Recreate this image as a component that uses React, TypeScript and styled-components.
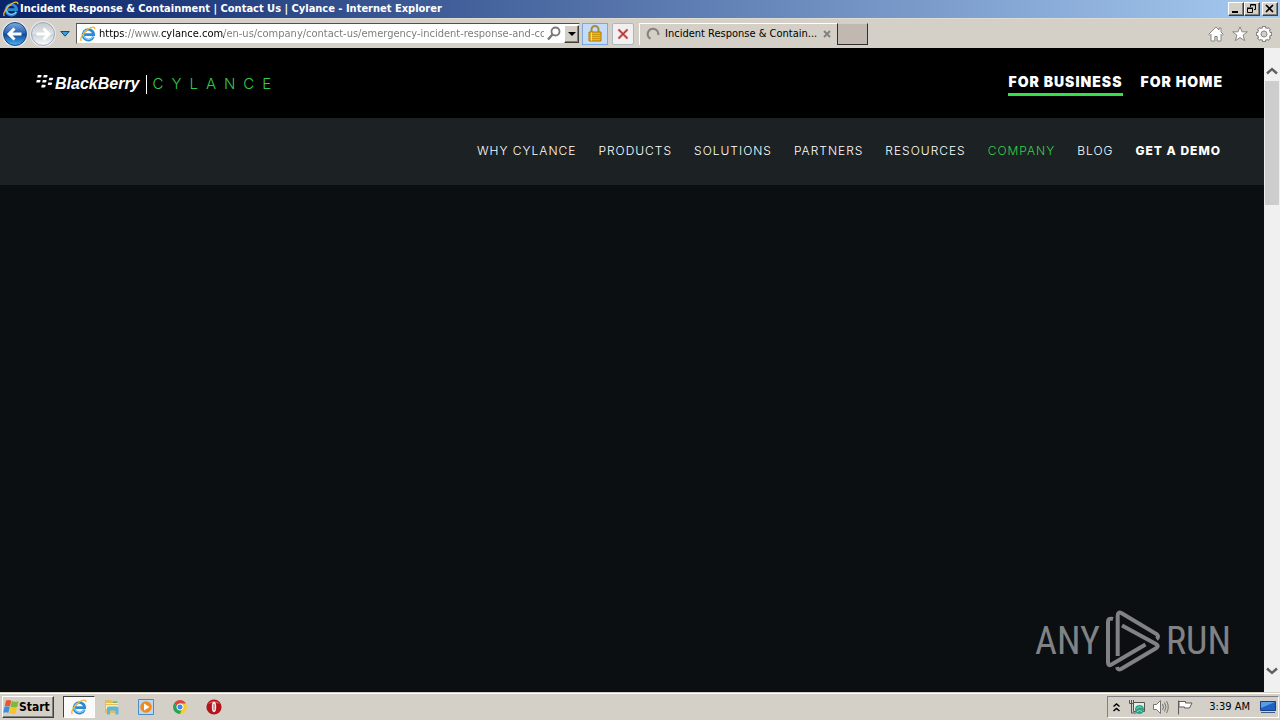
import React from "react";
import styled, { createGlobalStyle, css } from "styled-components";

const uiFont = '"DejaVu Sans Condensed", "DejaVu Sans", sans-serif';
const siteFont = 'Inter, Roboto, sans-serif';

const GlobalStyle = createGlobalStyle`
  * { box-sizing: border-box; }
  body { margin: 0; background: #d4d0c8; }
  button, input { font: inherit; padding: 0; margin: 0; }
  a { color: inherit; text-decoration: none; }
  svg { display: block; flex: none; }
`;

const raised = css`
  border: 1px solid;
  border-color: #ffffff #404040 #404040 #ffffff;
  box-shadow: inset -1px -1px 0 #808080;
`;

const Screen = styled.div`
  display: flex;
  flex-direction: column;
  min-height: 100vh;
  font: 11px/14px ${uiFont};
  color: #000;
`;

const TitleBar = styled.header`
  display: flex;
  align-items: center;
  gap: 1px;
  height: 18px;
  padding: 0 2px 0 3px;
  background: linear-gradient(to right, #0a246a, #a6caf0);
`;

const WindowTitle = styled.h1`
  flex: 1;
  margin: 0;
  overflow: hidden;
  white-space: nowrap;
  color: #fff;
  font: bold 11px/18px ${uiFont};
`;

const WindowButtons = styled.div`
  display: flex;
`;

const WindowButton = styled.button<{ $apart?: boolean }>`
  ${raised}
  display: grid;
  place-items: center;
  width: 16px;
  height: 14px;
  margin-left: ${(p) => (p.$apart ? 2 : 0)}px;
  background: #d4d0c8;
`;

const Toolbar = styled.div`
  display: flex;
  align-items: center;
  height: 30px;
  padding: 0 4px 0 1px;
  background: #d4d0c8;
  border-top: 1px solid #dedbd5;
`;

const PlainButton = styled.button<{ $w: number }>`
  display: grid;
  place-items: center;
  width: ${(p) => p.$w}px;
  height: 28px;
  border: 0;
  background: none;
`;

const AddressBar = styled.div`
  display: flex;
  align-items: center;
  gap: 3px;
  flex: 0 1 504px;
  min-width: 0;
  height: 21px;
  margin: 0 2px 0 4px;
  padding-left: 3px;
  background: #fff;
  border: 1px solid;
  border-color: #505050 #d4d0c8 #d4d0c8 #606060;
`;

const AddressInput = styled.input`
  flex: 1;
  min-width: 0;
  height: 18px;
  border: 0;
  outline: 0;
  color: #6d6d6d;
  background: linear-gradient(to right, #000 27px, #777 27px, #777 62px, #000 62px, #000 125px, #777 125px);
  -webkit-background-clip: text;
  background-clip: text;
  -webkit-text-fill-color: transparent;
`;

const DropButton = styled.button`
  ${raised}
  display: grid;
  place-items: center;
  width: 15px;
  height: 18px;
  background: #d4d0c8;
`;

const LockButton = styled.button`
  display: grid;
  place-items: center;
  width: 26px;
  height: 22px;
  background: #c4dcf8;
  border: 1px solid #7da7dc;
`;

const StopButton = styled.button`
  display: grid;
  place-items: center;
  width: 22px;
  height: 22px;
  margin: 0 5px 0 4px;
  background: #f1efef;
  border: 1px solid #aeb6c0;
  border-radius: 2px;
`;

const Tab = styled.div`
  display: flex;
  align-items: center;
  flex: 0 1 198px;
  min-width: 0;
  height: 22px;
  padding: 0 2px 0 6px;
  border-top: 1px solid #fff;
  border-left: 1px solid #fff;
`;

const TabTitle = styled.span`
  flex: 1;
  margin-left: 5px;
  white-space: nowrap;
`;

const NewTab = styled.button`
  width: 31px;
  height: 22px;
  background: #c1b9b1;
  border: 1px solid;
  border-color: #d4d0c8 #303030 #303030 #303030;
`;

const Spacer = styled.div`
  flex: 1;
`;

const ViewPort = styled.div`
  display: flex;
  flex: 1;
`;

const Page = styled.div`
  display: flex;
  flex-direction: column;
  flex: 1;
  min-width: 0;
  background: #0b0f12;
  color: #fff;
  font-family: ${siteFont};
`;

const BrandBar = styled.div`
  display: flex;
  align-items: center;
  justify-content: space-between;
  height: 70px;
  padding: 2px 41px 0 36px;
  background: #000;
`;

const Brand = styled.a`
  display: flex;
  align-items: center;
  height: 20px;
`;

const BlackBerryWord = styled.span`
  margin-left: 1px;
  font: italic bold 16px/20px "Liberation Sans", sans-serif;
`;

const BrandRule = styled.span`
  width: 1px;
  height: 19px;
  margin: 0 6px;
  background: #fff;
`;

const CylanceWord = styled.span`
  color: #35c94b;
  font: 300 15px/20px ${siteFont};
  letter-spacing: 8px;
`;

const Audience = styled.nav`
  display: flex;
  gap: 18px;
`;

const AudienceLink = styled.a<{ $current?: boolean }>`
  padding: 1px 0 2px;
  border-bottom: 3px solid ${(p) => (p.$current ? "#35e14a" : "transparent")};
  font-size: 14px;
  line-height: 18px;
  font-weight: 900;
  letter-spacing: 1px;
`;

const SiteNav = styled.nav`
  display: flex;
  align-items: center;
  justify-content: flex-end;
  gap: 22px;
  height: 67px;
  padding: 0 43px 2px 0;
  background: #1c2124;
`;

const NavLink = styled.a<{ $tone?: "current" | "strong" }>`
  color: ${(p) => (p.$tone === "current" ? "#35d046" : "#fff")};
  font-size: 12px;
  line-height: 16px;
  font-weight: ${(p) => (p.$tone === "strong" ? 800 : 300)};
  letter-spacing: 1px;
  white-space: nowrap;
`;

const Stage = styled.main`
  display: flex;
  flex: 1;
  align-items: flex-end;
  justify-content: flex-end;
  padding: 0 33px 20px 0;
`;

const Watermark = styled.div`
  display: flex;
  align-items: center;
  gap: 5px;
  color: #808285;
  font: 400 38px/62px "Roboto Condensed", "Liberation Sans Narrow", "DejaVu Sans Condensed", sans-serif;
`;

const ScrollTrack = styled.div`
  display: flex;
  flex-direction: column;
  width: 16px;
  padding: 14px 0 12px;
  background: #f0f0f0;
`;

const ScrollButton = styled.button`
  display: grid;
  place-items: center;
  height: 18px;
  width: 16px;
  border: 0;
  background: none;
`;

const ScrollThumb = styled.div`
  height: 124px;
  margin: 1px 1px 0;
  background: #cdcdcd;
`;

const TaskBar = styled.footer`
  display: flex;
  align-items: center;
  height: 28px;
  padding: 2px 1px 0 2px;
  background: #d4d0c8;
  box-shadow: inset 0 1px 0 #d4d0c8, inset 0 2px 0 #fff;
`;

const StartButton = styled.button`
  ${raised}
  display: flex;
  align-items: center;
  width: 52px;
  height: 22px;
  background: #d4d0c8;
  font: bold 12px/16px ${uiFont};
`;

const TaskButton = styled.button<{ $pressed?: boolean }>`
  display: grid;
  place-items: center;
  width: ${(p) => (p.$pressed ? 32 : 34)}px;
  height: 22px;
  margin-left: ${(p) => (p.$pressed ? 9 : 0)}px;
  background: ${(p) => (p.$pressed ? "#fbfaf8" : "none")};
  border: ${(p) => (p.$pressed ? "1px solid" : "0")};
  border-color: #404040 #fff #fff #404040;
`;

const Tray = styled.div`
  display: flex;
  align-items: center;
  height: 22px;
  padding: 0 2px 0 4px;
  gap: 8px;
  border: 1px solid;
  border-color: #808080 #fff #fff #808080;
`;

const Clock = styled.time`
  margin: 0 2px 0 8px;
  white-space: nowrap;
`;

const IeIcon = ({ size = 16 }: { size?: number }) => (
  <svg width={size} height={size} viewBox="0 0 16 16" fill="none">
    <path d="M13.4 10.6A5.3 5.3 0 1 1 13.7 8.700H4.600" stroke="#2b8ad6" strokeWidth="2.700" />
    <path d="M13.2 10.9A5.3 5.3 0 0 1 3.4 8.5C3.4 6 5.500 3.900 8.300 3.900" stroke="#7fcdf7" strokeWidth="1.200" />
    <path d="M1.200 15C-.4 12.500 3.500 6.200 8.300 3 11.500.8 15 .2 14.800 3.200" stroke="#f0b62a" strokeWidth="1.300" />
  </svg>
);

const RoundArrow = ({ dir }: { dir: "back" | "forward" }) => {
  const back = dir === "back";
  return (
    <svg width="28" height="28" viewBox="0 0 28 28">
      <defs>
        <linearGradient id={dir} x1="0" y1="0" x2="0" y2="1">
          <stop offset="0" stopColor={back ? "#7fabdf" : "#c6cbd1"} />
          <stop offset=".48" stopColor={back ? "#245fb0" : "#dfe2e6"} />
          <stop offset=".5" stopColor={back ? "#104894" : "#c9d0d7"} />
          <stop offset="1" stopColor={back ? "#49b2f0" : "#fbfcfd"} />
        </linearGradient>
      </defs>
      <circle cx="14" cy="14" r="13" fill="#e7ebf1" />
      <circle cx="14" cy="14" r="11.500" fill={`url(#${dir})`} stroke={back ? "#1d4782" : "#9da6b1"} />
      <path
        d={back ? "M20.500 14H9M13.500 8.500 8 14l5.500 5.500" : "M7.500 14H19M14.500 8.500 20 14l-5.500 5.500"}
        fill="none"
        stroke="#fff"
        strokeWidth="3"
      />
    </svg>
  );
};

const LockIcon = () => (
  <svg width="14" height="17" viewBox="0 0 14 17">
    <path d="M3.500 8V4.500a3.500 3.500 0 0 1 7 0V8" fill="none" stroke="#a58b3c" strokeWidth="2" />
    <path d="M1 7h12v9H1z" fill="#e9b71d" stroke="#a97908" />
    <path d="M2 9.500h10M2 11.500h10M2 13.500h10" stroke="#cf9a12" />
    <path d="M3.500 7.500v8" stroke="#fbe27a" />
  </svg>
);

const BerryDots = () => (
  <svg width="18" height="20" viewBox="0 0 18 20" fill="#fff">
    <path d="M1.800 1h3q1 0 .8 1.100-.3 1.500-1.600 1.500H1.200zM7.800 1h3q1 0 .8 1.100-.3 1.500-1.600 1.500H7.200zM.8 6h3q1 0 .8 1.100-.3 1.500-1.600 1.500H.2zM6.800 6h3q1 0 .8 1.100-.3 1.500-1.600 1.500H6.200zM13.300 3.700h3q1 0 .8 1.100-.3 1.500-1.600 1.500h-2.800zM12.300 8.500h3q1 0 .8 1.100-.3 1.500-1.600 1.500h-2.800zM5.800 10.800h3q1 0 .8 1.100-.3 1.500-1.600 1.500H5.200z" />
  </svg>
);

const PlayMark = () => (
  <svg width="56" height="62" viewBox="0 0 56 62" fill="none" stroke="#808285" strokeWidth="4">
    <path d="M8 9Q3 7.500 3 12V52.500q0 4 3.500 2L40.500 34.500" />
    <path d="M12.700 46V6q0-5 4-2.700L51.500 24q3 3 0 5" />
    <path d="M17 15.500 51 34q3.500 2 0 4.200L16 59q-3 1.500-4-2" />
  </svg>
);

const Chevron = ({ down }: { down?: boolean }) => (
  <svg width="12" height="8" viewBox="0 0 12 8">
    <path d={down ? "M1 1.500 6 6l5-4.500" : "M1 6.500 6 2l5 4.500"} fill="none" stroke="#606060" strokeWidth="2.400" />
  </svg>
);

const nav: { label: string; tone?: "current" | "strong" }[] = [
  { label: "WHY CYLANCE" },
  { label: "PRODUCTS" },
  { label: "SOLUTIONS" },
  { label: "PARTNERS" },
  { label: "RESOURCES" },
  { label: "COMPANY", tone: "current" },
  { label: "BLOG" },
  { label: "GET A DEMO", tone: "strong" },
];

export default function App() {
  return (
    <Screen>
      <GlobalStyle />
      <TitleBar>
        <IeIcon />
        <WindowTitle>Incident Response &amp; Containment | Contact Us | Cylance - Internet Explorer</WindowTitle>
        <WindowButtons>
          <WindowButton aria-label="Minimize">
            <svg width="12" height="10"><path d="M2 8h6" stroke="#000" strokeWidth="2" /></svg>
          </WindowButton>
          <WindowButton aria-label="Restore">
            <svg width="12" height="10" fill="none" stroke="#000">
              <path d="M4.500 3V.5h5v5H8M4 1h6M1.500 4.500h5v4h-5zM1 4h6" />
            </svg>
          </WindowButton>
          <WindowButton aria-label="Close" $apart>
            <svg width="12" height="10"><path d="m2 1 7 7M9 1 2 8" stroke="#000" strokeWidth="1.700" /></svg>
          </WindowButton>
        </WindowButtons>
      </TitleBar>

      <Toolbar>
        <PlainButton $w={28} aria-label="Back"><RoundArrow dir="back" /></PlainButton>
        <PlainButton $w={28} aria-label="Forward"><RoundArrow dir="forward" /></PlainButton>
        <PlainButton $w={15} aria-label="Recent pages">
          <svg width="10" height="6"><path d="M.8.5h8.400L5 5.200z" fill="#3aa0d8" stroke="#174a7c" /></svg>
        </PlainButton>
        <AddressBar>
          <IeIcon />
          <AddressInput
            aria-label="Address"
            defaultValue="https://www.cylance.com/en-us/company/contact-us/emergency-incident-response-and-cor"
          />
          <svg width="14" height="15" viewBox="0 0 14 15" fill="none" stroke="#777">
            <circle cx="8.500" cy="5.500" r="4" strokeWidth="1.800" />
            <path d="m5.500 8.500-4.500 5" strokeWidth="2.400" />
          </svg>
          <DropButton aria-label="Show address list">
            <svg width="8" height="4"><path d="M0 0h8L4 4z" /></svg>
          </DropButton>
        </AddressBar>
        <LockButton aria-label="Security report"><LockIcon /></LockButton>
        <StopButton aria-label="Stop">
          <svg width="12" height="12" fill="none">
            <path d="m1.500 1.500 9 9M10.500 1.500l-9 9" stroke="#dfa0a0" strokeWidth="2.600" />
            <path d="m1.500 1.500 9 9M10.500 1.500l-9 9" stroke="#b83232" strokeWidth="1.400" />
          </svg>
        </StopButton>
        <Tab>
          <svg width="14" height="14" viewBox="0 0 14 14" fill="none" stroke="#86827c" strokeWidth="2.200">
            <path d="M4.500 11.800A5.300 5.300 0 1 1 12.200 8" />
          </svg>
          <TabTitle>Incident Response &amp; Contain...</TabTitle>
          <PlainButton $w={16} aria-label="Close tab">
            <svg width="8" height="8"><path d="m1 1 6 6M7 1 1 7" stroke="#85827d" strokeWidth="2" /></svg>
          </PlainButton>
        </Tab>
        <NewTab aria-label="New tab" />
        <Spacer />
        <PlainButton $w={24} aria-label="Home">
          <svg width="16" height="16" viewBox="0 0 16 16" fill="#fff" stroke="#8a8782">
            <path d="M8 1 .8 8.200l1.200 1.200 1-1V15h3.800v-4.500h2.400V15H13V8.400l1 1 1.200-1.200L13 6V2h-2v2z" />
          </svg>
        </PlainButton>
        <PlainButton $w={24} aria-label="Favorites">
          <svg width="16" height="16" viewBox="0 0 16 16" fill="#fff" stroke="#8a8782">
            <path d="m8 .8 2 5h5.300l-4.200 3.400 1.600 5.500L8 11.500l-4.700 3.200 1.600-5.500L.7 5.800H6z" />
          </svg>
        </PlainButton>
        <PlainButton $w={24} aria-label="Tools">
          <svg width="18" height="18" viewBox="0 0 18 18" fill="none">
            <path d="M9 1v16M1 9h16M3.300 3.300l11.400 11.400M14.700 3.300 3.300 14.700" stroke="#8a8782" strokeWidth="4" />
            <circle cx="9" cy="9" r="4.700" stroke="#8a8782" strokeWidth="4.600" />
            <path d="M9 2v14M2 9h14M4 4l10 10M14 4 4 14" stroke="#fff" strokeWidth="2" />
            <circle cx="9" cy="9" r="4.500" fill="#d4d0c8" stroke="#fff" strokeWidth="3" />
            <circle cx="9" cy="9" r="3" stroke="#8a8782" />
          </svg>
        </PlainButton>
      </Toolbar>

      <ViewPort>
        <Page>
          <BrandBar>
            <Brand href="#">
              <BerryDots />
              <BlackBerryWord>BlackBerry</BlackBerryWord>
              <BrandRule />
              <CylanceWord>CYLANCE</CylanceWord>
            </Brand>
            <Audience aria-label="Audience">
              <AudienceLink href="#" $current>FOR BUSINESS</AudienceLink>
              <AudienceLink href="#">FOR HOME</AudienceLink>
            </Audience>
          </BrandBar>
          <SiteNav aria-label="Main">
            {nav.map((item) => (
              <NavLink key={item.label} href="#" $tone={item.tone}>{item.label}</NavLink>
            ))}
          </SiteNav>
          <Stage>
            <Watermark>
              <span>ANY</span>
              <PlayMark />
              <span>RUN</span>
            </Watermark>
          </Stage>
        </Page>
        <ScrollTrack>
          <ScrollButton aria-label="Scroll up"><Chevron /></ScrollButton>
          <ScrollThumb />
          <Spacer />
          <ScrollButton aria-label="Scroll down"><Chevron down /></ScrollButton>
        </ScrollTrack>
      </ViewPort>

      <TaskBar>
        <StartButton>
          <svg width="16" height="16" viewBox="0 0 16 16">
            <path d="M3 1.500q2.700-1.200 5.300 0L7 7.300q-2.700-1-5.300.2z" fill="#e8562a" />
            <path d="M8.800 2q2.900 1.400 6.900.2L14.200 8q-3.600 1.200-6.700-.3z" fill="#7fb83a" />
            <path d="M1.500 8q2.700-1.200 5.300-.2L5.400 13.700q-2.700-1-5.200.1z" fill="#3c8fd8" />
            <path d="M7.300 8.300q3.200 1.400 6.700.3l-1.400 5.900q-3.600 1.200-6.700-.4z" fill="#f6c52c" />
          </svg>
          Start
        </StartButton>
        <TaskButton $pressed aria-label="Internet Explorer"><IeIcon /></TaskButton>
        <TaskButton aria-label="Explorer">
          <svg width="16" height="16" viewBox="0 0 16 16">
            <path d="M1 1h6l1 1.500h6V14H1z" fill="#e3bf55" />
            <path d="M2 4h12v6H2z" fill="#fbeeb0" />
            <path d="M2 5.500h12" stroke="#e3bf55" />
            <path d="M3 15.500V9q0-1.500 1.500-1.500h8.500q1.500 0 1.500 1.500v6.500h-3V11.500h-5.500v4z" fill="#5db5e2" />
            <path d="M9 2.500h4V4H9z" fill="#6db45f" />
          </svg>
        </TaskButton>
        <TaskButton aria-label="Media Player">
          <svg width="16" height="16" viewBox="0 0 16 16">
            <path d="M.5.5h15v15H.5z" fill="#b9d8f2" stroke="#4b8cc8" />
            <circle cx="8" cy="8" r="5.800" fill="#f18a1c" />
            <path d="M6 4.500v7L11.500 8z" fill="#fff" />
          </svg>
        </TaskButton>
        <TaskButton aria-label="Chrome">
          <svg width="14" height="14" viewBox="0 0 14 14">
            <path d="M7 7 1 3.500a7 7 0 0 1 12 0z" fill="#dd4437" />
            <path d="M7 7V3.500h6A7 7 0 0 1 7 14z" fill="#f8cd2e" />
            <path d="m7 7 1.500 3L7 14A7 7 0 0 1 1 3.500z" fill="#2da152" />
            <circle cx="7" cy="7" r="3.100" fill="#4387ed" stroke="#fff" />
          </svg>
        </TaskButton>
        <TaskButton aria-label="Opera">
          <svg width="16" height="16" viewBox="0 0 16 16">
            <circle cx="8" cy="8" r="7.600" fill="#b3131b" />
            <path d="M2 5a7 6 0 0 1 12 0q-6-2-12 0" fill="#d9504c" />
            <ellipse cx="8" cy="8" rx="2.200" ry="5.200" fill="#f4e9e7" />
            <path d="M8 5v6" stroke="#a8545a" />
          </svg>
        </TaskButton>
        <Spacer />
        <Tray>
          <svg width="9" height="9" viewBox="0 0 9 9" fill="none" stroke="#000"><path d="M1.500 3.500l3-2.500 3 2.500M1.500 8l3-2.500 3 2.500" strokeWidth="1.500" /></svg>
          <svg width="16" height="16" viewBox="0 0 16 16">
            <path d="M4.500 3.500h11v9h-11z" fill="#dff0ea" stroke="#555" />
            <path d="M.5 1v3.500h4V1M2.500 1v3M2.500 5v9h5" fill="none" stroke="#555" />
            <circle cx="10.500" cy="10.500" r="4.500" fill="#2e9f83" />
            <path d="M7.500 10q3-4 5-1M8 12.500q3-2 5 0" fill="none" stroke="#8fe0c3" />
          </svg>
          <svg width="16" height="16" viewBox="0 0 16 16" fill="none" stroke="#77736e">
            <path d="M.5 5.500h3l4-4v13l-4-4h-3z" fill="#fff" />
            <path d="M9.500 5q2 3 0 6M11.500 3.500q3 4.500 0 9M13.500 2q3.500 6 0 12" />
          </svg>
          <svg width="16" height="16" viewBox="0 0 16 16" fill="#fff" stroke="#5f5c58">
            <path d="M1.500 1.500v14M2 2.500h6.500v1.500l6.500 0-2.500 5H7.500V8H2z" />
          </svg>
          <Clock dateTime="03:39">3:39 AM</Clock>
          <svg width="16" height="14" viewBox="0 0 16 14">
            <path d="M.5 1.500h15v9H.5z" fill="#1e62c4" stroke="#1b3f7c" />
            <path d="M1 2h14L1 8z" fill="#5b9be8" />
            <path d="M1 12.500h14" stroke="#3c5a86" />
          </svg>
        </Tray>
      </TaskBar>
    </Screen>
  );
}
